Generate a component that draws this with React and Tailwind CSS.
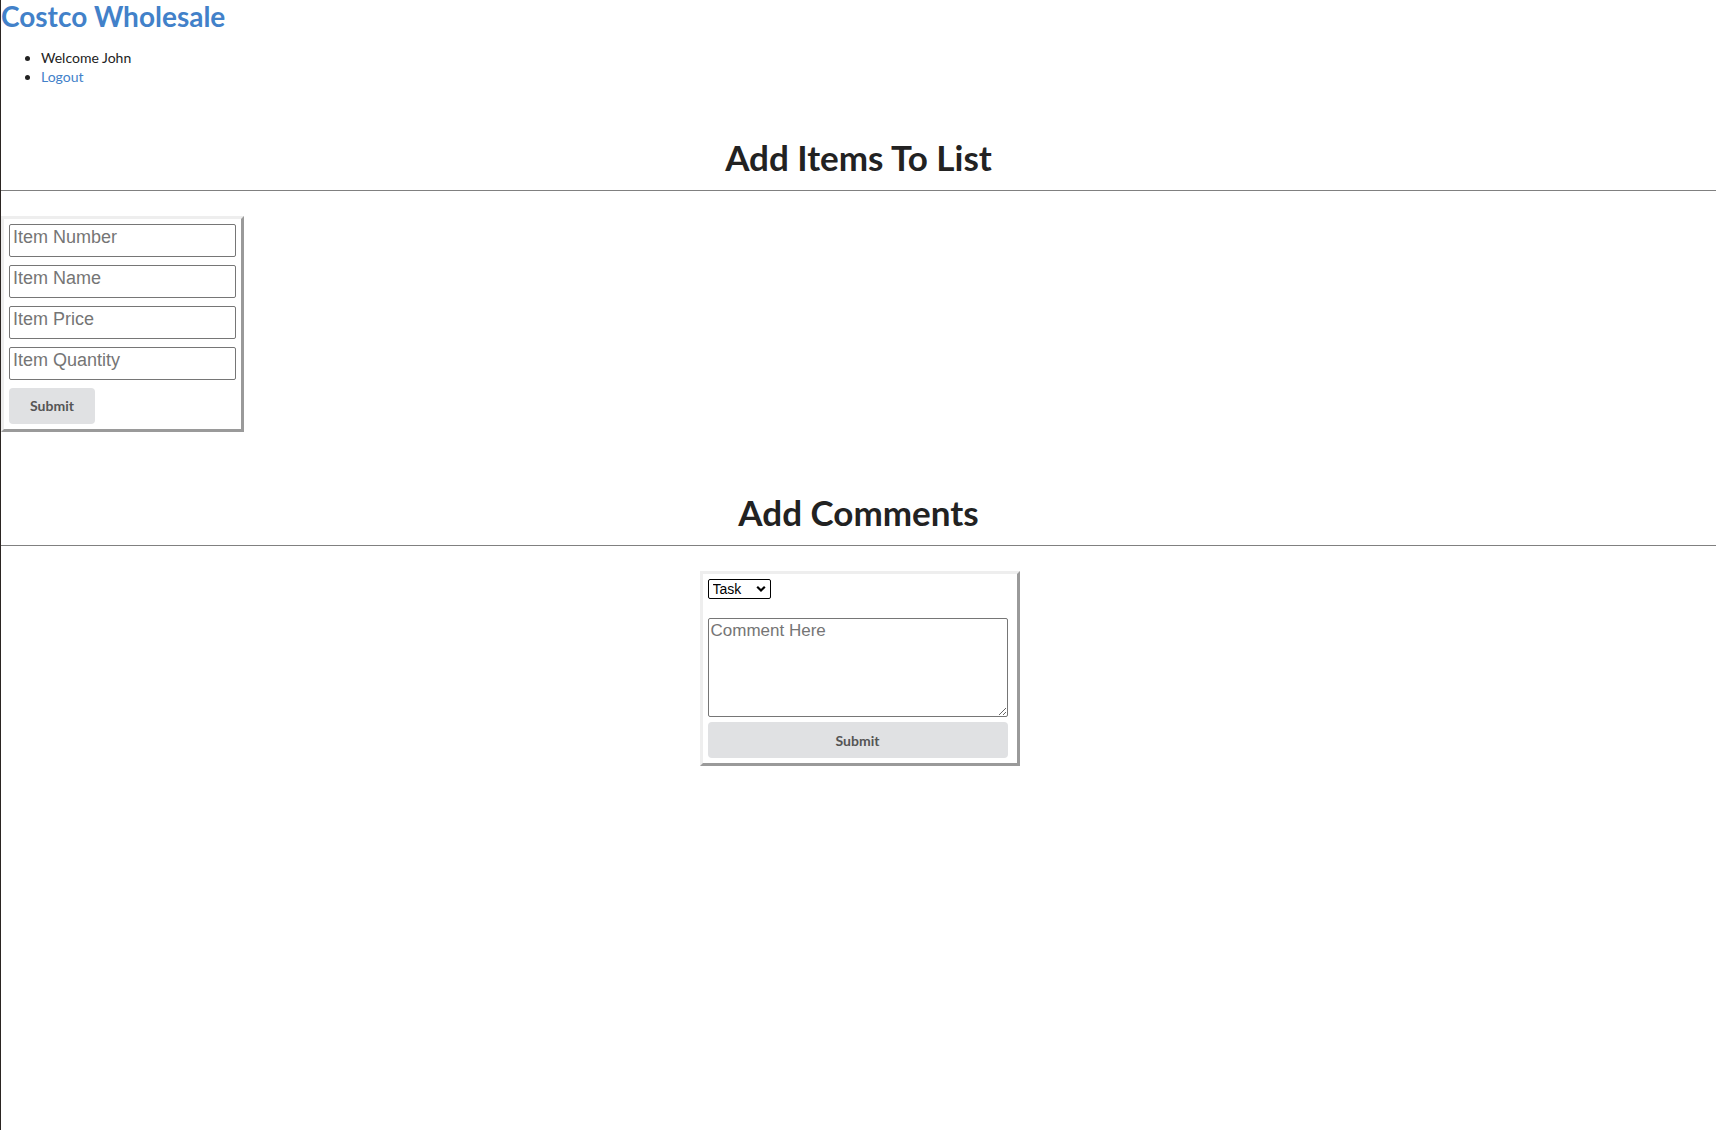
import React, { useState } from "react";

const boxBorder =
  "border-[3px] border-t-[#eeeeee] border-l-[#eeeeee] border-r-[#9a9a9a] border-b-[#9a9a9a]";

const fieldClass =
  "block w-full h-[33px] border border-[#767676] rounded-[2px] bg-white px-[3px] pt-[2px] pb-[9px] font-['Liberation_Sans',Arial,sans-serif] text-[18px] leading-normal text-black placeholder:text-[#757575] outline-none";

const buttonClass =
  "h-[36px] rounded-[4px] bg-[#e0e1e3] text-[14px] font-bold text-[#555555] font-['Lato',sans-serif] cursor-pointer";

function AddItemsForm() {
  const [item, setItem] = useState({ number: "", name: "", price: "", quantity: "" });

  return (
    <form
      onSubmit={(e) => e.preventDefault()}
      className={`${boxBorder} w-[243px] p-[5px] flex flex-col gap-[8px] bg-white`}
    >
      <input className={fieldClass} placeholder="Item Number" value={item.number} onChange={(e) => setItem({ ...item, number: e.target.value })} />
      <input className={fieldClass} placeholder="Item Name" value={item.name} onChange={(e) => setItem({ ...item, name: e.target.value })} />
      <input className={fieldClass} placeholder="Item Price" value={item.price} onChange={(e) => setItem({ ...item, price: e.target.value })} />
      <input className={fieldClass} placeholder="Item Quantity" value={item.quantity} onChange={(e) => setItem({ ...item, quantity: e.target.value })} />
      <button type="submit" className={`${buttonClass} w-[86px] pb-[1px]`}>Submit</button>
    </form>
  );
}

function AddCommentsForm() {
  const [kind, setKind] = useState("Task");
  const [comment, setComment] = useState("");

  return (
    <form
      onSubmit={(e) => e.preventDefault()}
      className={`${boxBorder} w-[320px] mx-auto p-[5px] flex flex-col bg-white`}
    >
      <div className="relative w-[63px] h-[20px]">
        <select
          value={kind}
          onChange={(e) => setKind(e.target.value)}
          className="block appearance-none w-full h-full border border-black rounded-[2px] bg-white pl-[4px] font-['Liberation_Sans',Arial,sans-serif] text-[14px] leading-[18px] text-black outline-none"
        >
          <option>Task</option>
          <option>Note</option>
        </select>
        <svg className="pointer-events-none absolute right-[5px] top-1/2 -translate-y-1/2" width="10" height="7" viewBox="0 0 10 7">
          <path d="M1.2 1.2 L5 5 L8.8 1.2" fill="none" stroke="black" strokeWidth="2.2" />
        </svg>
      </div>
      <textarea
        value={comment}
        onChange={(e) => setComment(e.target.value)}
        placeholder="Comment Here"
        className="block mt-[19px] w-[300px] h-[99px] border border-[#767676] rounded-[2px] p-[2px] font-['Liberation_Sans',Arial,sans-serif] text-[17px] leading-[normal] text-black placeholder:text-[#757575] outline-none"
      />
      <button type="submit" className={`${buttonClass} mt-[5px] w-[300px]`}>Submit</button>
    </form>
  );
}

export default function App() {
  return (
    <div className="min-h-screen border-l border-[#2b2522] bg-white font-['Lato',sans-serif] text-[#222222]">
      <h1 className="text-[28px] leading-[32px] font-bold text-[#4281c9]">Costco Wholesale</h1>
      <ul className="mt-[17px] pl-[40px] list-disc text-[14px] leading-[18.5px]">
        <li>Welcome John</li>
        <li>
          <a href="#" className="text-[#4281c9]">Logout</a>
        </li>
      </ul>

      <h2 className="mt-[50px] text-center text-[35px] leading-[42px] font-bold">Add Items To List</h2>
      <hr className="mt-[12px] border-t border-[#808080]" />
      <div className="mt-[25px]">
        <AddItemsForm />
      </div>

      <h2 className="mt-[59px] text-center text-[35px] leading-[42px] font-bold">Add Comments</h2>
      <hr className="mt-[12px] border-t border-[#808080]" />
      <div className="mt-[25px] pl-[2px]">
        <AddCommentsForm />
      </div>
    </div>
  );
}
